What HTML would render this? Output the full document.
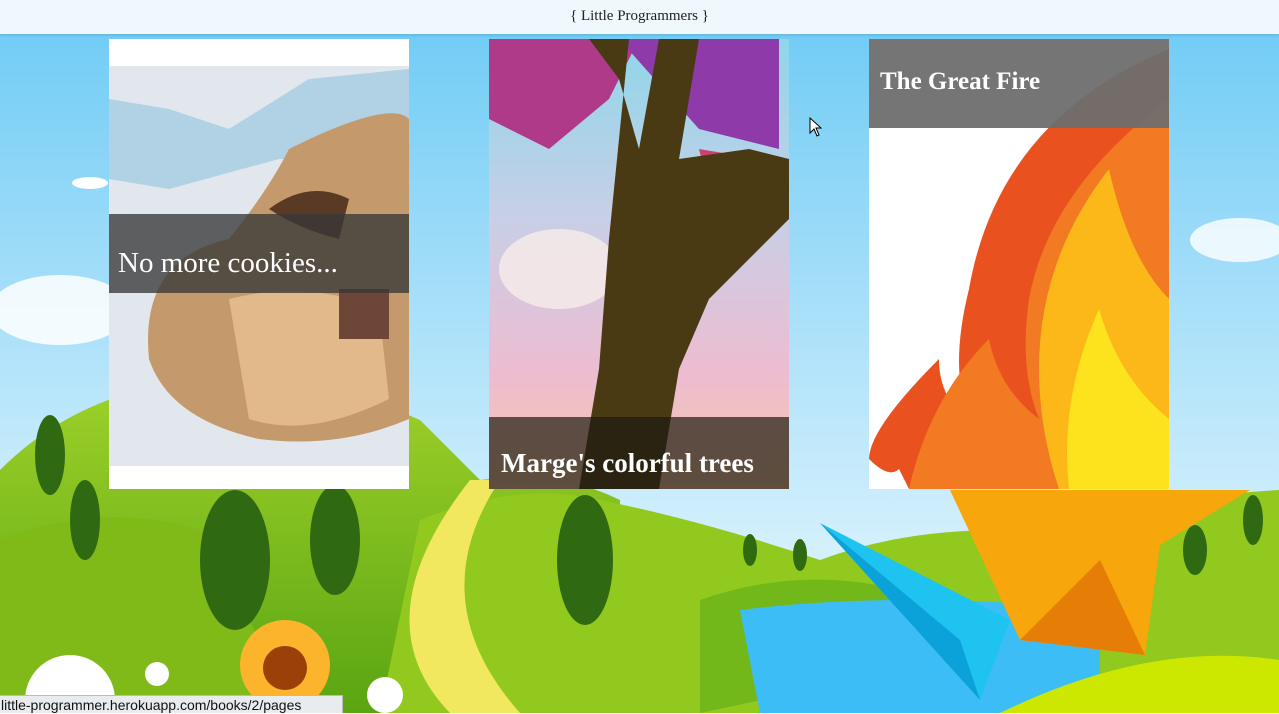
<!DOCTYPE html>
<html><head><meta charset="utf-8"><style>
html,body{margin:0;padding:0;width:1279px;height:713px;overflow:hidden;font-family:"Liberation Serif",serif}
.bg{position:absolute;left:0;top:0;width:1279px;height:713px}
.hdr{position:absolute;left:0;top:0;width:1279px;height:34px;background:#eef8fd;text-align:center;line-height:33px;font-size:15px;color:#222;box-shadow:0 1px 3px rgba(0,0,0,.15)}
.card{position:absolute;top:39px;width:300px;height:450px;overflow:hidden}
.band{position:absolute;left:0;width:300px;color:#fff;box-sizing:border-box}
.status{position:absolute;left:0;top:695px;height:18px;width:343px;background:#e8ecef;border:1px solid #bbb;border-left:none;border-bottom:none;font-family:"Liberation Sans",sans-serif;font-size:14px;line-height:18px;color:#111;padding-left:1px;box-sizing:border-box}
</style></head><body>
<svg class="bg" viewBox="0 0 1279 713">
<defs>
<linearGradient id="sky" x1="0" y1="0" x2="0" y2="1"><stop offset="0" stop-color="#6ccaf5"/><stop offset="0.6" stop-color="#bfe8fb"/><stop offset="1" stop-color="#effafd"/></linearGradient>
<linearGradient id="hill" x1="0" y1="0" x2="0" y2="1"><stop offset="0" stop-color="#9fd12a"/><stop offset="1" stop-color="#5aa512"/></linearGradient>
</defs>
<rect width="1279" height="713" fill="url(#sky)"/>
<ellipse cx="60" cy="310" rx="70" ry="35" fill="#fff" opacity=".85"/>
<ellipse cx="1240" cy="240" rx="50" ry="22" fill="#fff" opacity=".8"/>
<ellipse cx="90" cy="183" rx="18" ry="6" fill="#fff"/>
<path d="M0 470 Q80 390 200 380 Q330 380 420 420 L480 480 Q560 470 620 500 L620 713 L0 713Z" fill="url(#hill)"/>
<path d="M380 713 L420 520 Q520 480 600 500 Q700 520 820 560 Q900 530 1000 530 Q1120 500 1279 490 L1279 713Z" fill="#92c91e"/>
<path d="M0 540 Q100 500 200 530 L300 713 L0 713Z" fill="#7fba18"/>
<path d="M700 600 Q800 565 900 590 L1000 650 L700 713Z" fill="#72b81a"/>
<path d="M740 610 Q900 590 1100 610 L1100 713 L760 713Z" fill="#3cbdf5"/>
<path d="M450 713 Q360 620 470 480 L500 480 Q420 600 520 713Z" fill="#f1e860"/>
<path d="M1000 713 Q1150 640 1279 660 L1279 713Z" fill="#cde800"/>
<g fill="#2f6a12">
<ellipse cx="50" cy="455" rx="15" ry="40"/><ellipse cx="85" cy="520" rx="15" ry="40"/><ellipse cx="235" cy="560" rx="35" ry="70"/><ellipse cx="335" cy="540" rx="25" ry="55"/><ellipse cx="585" cy="560" rx="28" ry="65"/><ellipse cx="750" cy="550" rx="7" ry="16"/><ellipse cx="800" cy="555" rx="7" ry="16"/><ellipse cx="1195" cy="550" rx="12" ry="25"/><ellipse cx="1253" cy="520" rx="10" ry="25"/>
</g>
<path d="M820 523 L1010 620 L980 700 Z" fill="#1ec3f0"/>
<path d="M820 523 L980 700 L960 640Z" fill="#0aa2d8"/>
<path d="M950 490 L1250 490 L1160 545 L1145 655 L1020 640Z" fill="#f7a60c"/>
<path d="M1020 640 L1145 655 L1100 560Z" fill="#e57d06"/>
<circle cx="285" cy="665" r="45" fill="#fcb42c"/><circle cx="285" cy="668" r="22" fill="#9a4008"/>
<circle cx="70" cy="700" r="45" fill="#fff"/><circle cx="385" cy="695" r="18" fill="#fff"/><circle cx="157" cy="674" r="12" fill="#fff"/>
</svg>
<div class="hdr">{ Little Programmers }</div>

<div class="card" style="left:109px;background:#fff">
<svg width="300" height="450" style="position:absolute;left:0;top:0">
<rect y="27" width="300" height="400" fill="#e2e6ed"/>
<path d="M0 60 L60 70 L120 90 L200 40 L300 30 L300 120 L170 120 L60 150 L0 140Z" fill="#9cc8e0" opacity=".7"/>
<path d="M180 110 Q280 60 300 80 L300 380 Q230 410 150 400 Q60 380 40 320 Q30 220 120 200 Q160 150 180 110Z" fill="#c49a6c"/>
<path d="M120 260 Q200 240 270 270 L280 360 Q200 400 140 380Z" fill="#e2b98a"/>
<path d="M160 170 Q200 140 240 160 L230 200 Q190 190 160 170Z" fill="#5a3a25"/>
<path d="M230 250 L280 250 L280 300 L230 300Z" fill="#6d4638"/>
</svg>
<div class="band" style="top:175px;height:79px;background:rgba(55,55,55,.78);font-size:29px;padding:33px 0 0 9px">No more cookies...</div>
</div>

<div class="card" style="left:489px;background:linear-gradient(#8ed6ea 0%,#c8cfe6 40%,#eebcd0 75%,#f3c8a8 100%)">
<svg width="300" height="450" style="position:absolute;left:0;top:0">
<ellipse cx="70" cy="230" rx="60" ry="40" fill="#f7ecea" opacity=".8"/>
<path d="M0 0 L150 0 L120 60 L60 110 L0 80Z" fill="#b03a8a"/>
<path d="M130 0 L290 0 L290 110 L210 90 Z" fill="#8e3aa8"/>
<path d="M210 110 L270 120 L260 160 L220 150Z" fill="#c84470"/>
<path d="M100 0 L140 0 L120 200 L110 330 L90 450 L170 450 L190 330 L220 260 L300 180 L300 120 L260 110 L190 120 L210 0 L170 0 L150 110 L130 40 Z" fill="#4a3a14"/>
</svg>
<div class="band" style="top:378px;height:72px;background:rgba(30,25,15,.7);font-size:27px;font-weight:bold;padding:31px 0 0 12px">Marge's colorful trees</div>
</div>

<div class="card" style="left:869px;background:#fff">
<svg width="300" height="450" style="position:absolute;left:0;top:0">
<path d="M300 10 Q130 80 100 250 Q80 330 100 380 Q70 360 70 320 Q0 390 0 420 L0 450 L300 450Z" fill="#e9511f"/>
<path d="M300 60 Q180 150 160 260 Q150 330 170 380 Q130 350 120 300 Q60 360 40 450 L300 450Z" fill="#f27a22"/>
<path d="M240 130 Q170 220 170 330 Q170 390 190 450 L300 450 L300 260 Q260 220 240 130Z" fill="#fbb818"/>
<path d="M230 270 Q190 360 200 450 L300 450 L300 380 Q250 340 230 270Z" fill="#fde31e"/>
<path d="M0 420 Q20 440 30 430 L40 450 L0 450Z" fill="#fff"/>
</svg>
<div class="band" style="top:0;height:89px;background:rgba(110,110,110,.95);font-size:25px;font-weight:bold;padding:29px 0 0 11px">The Great Fire</div>
</div>

<svg style="position:absolute;left:809px;top:117px" width="14" height="20" viewBox="0 0 14 20"><path d="M1 1 L1 16 L5 12 L8 19 L10 18 L7 11 L12 11Z" fill="#fff" stroke="#000" stroke-width="1"/></svg>

<div class="status">little-programmer.herokuapp.com/books/2/pages</div>
</body></html>
